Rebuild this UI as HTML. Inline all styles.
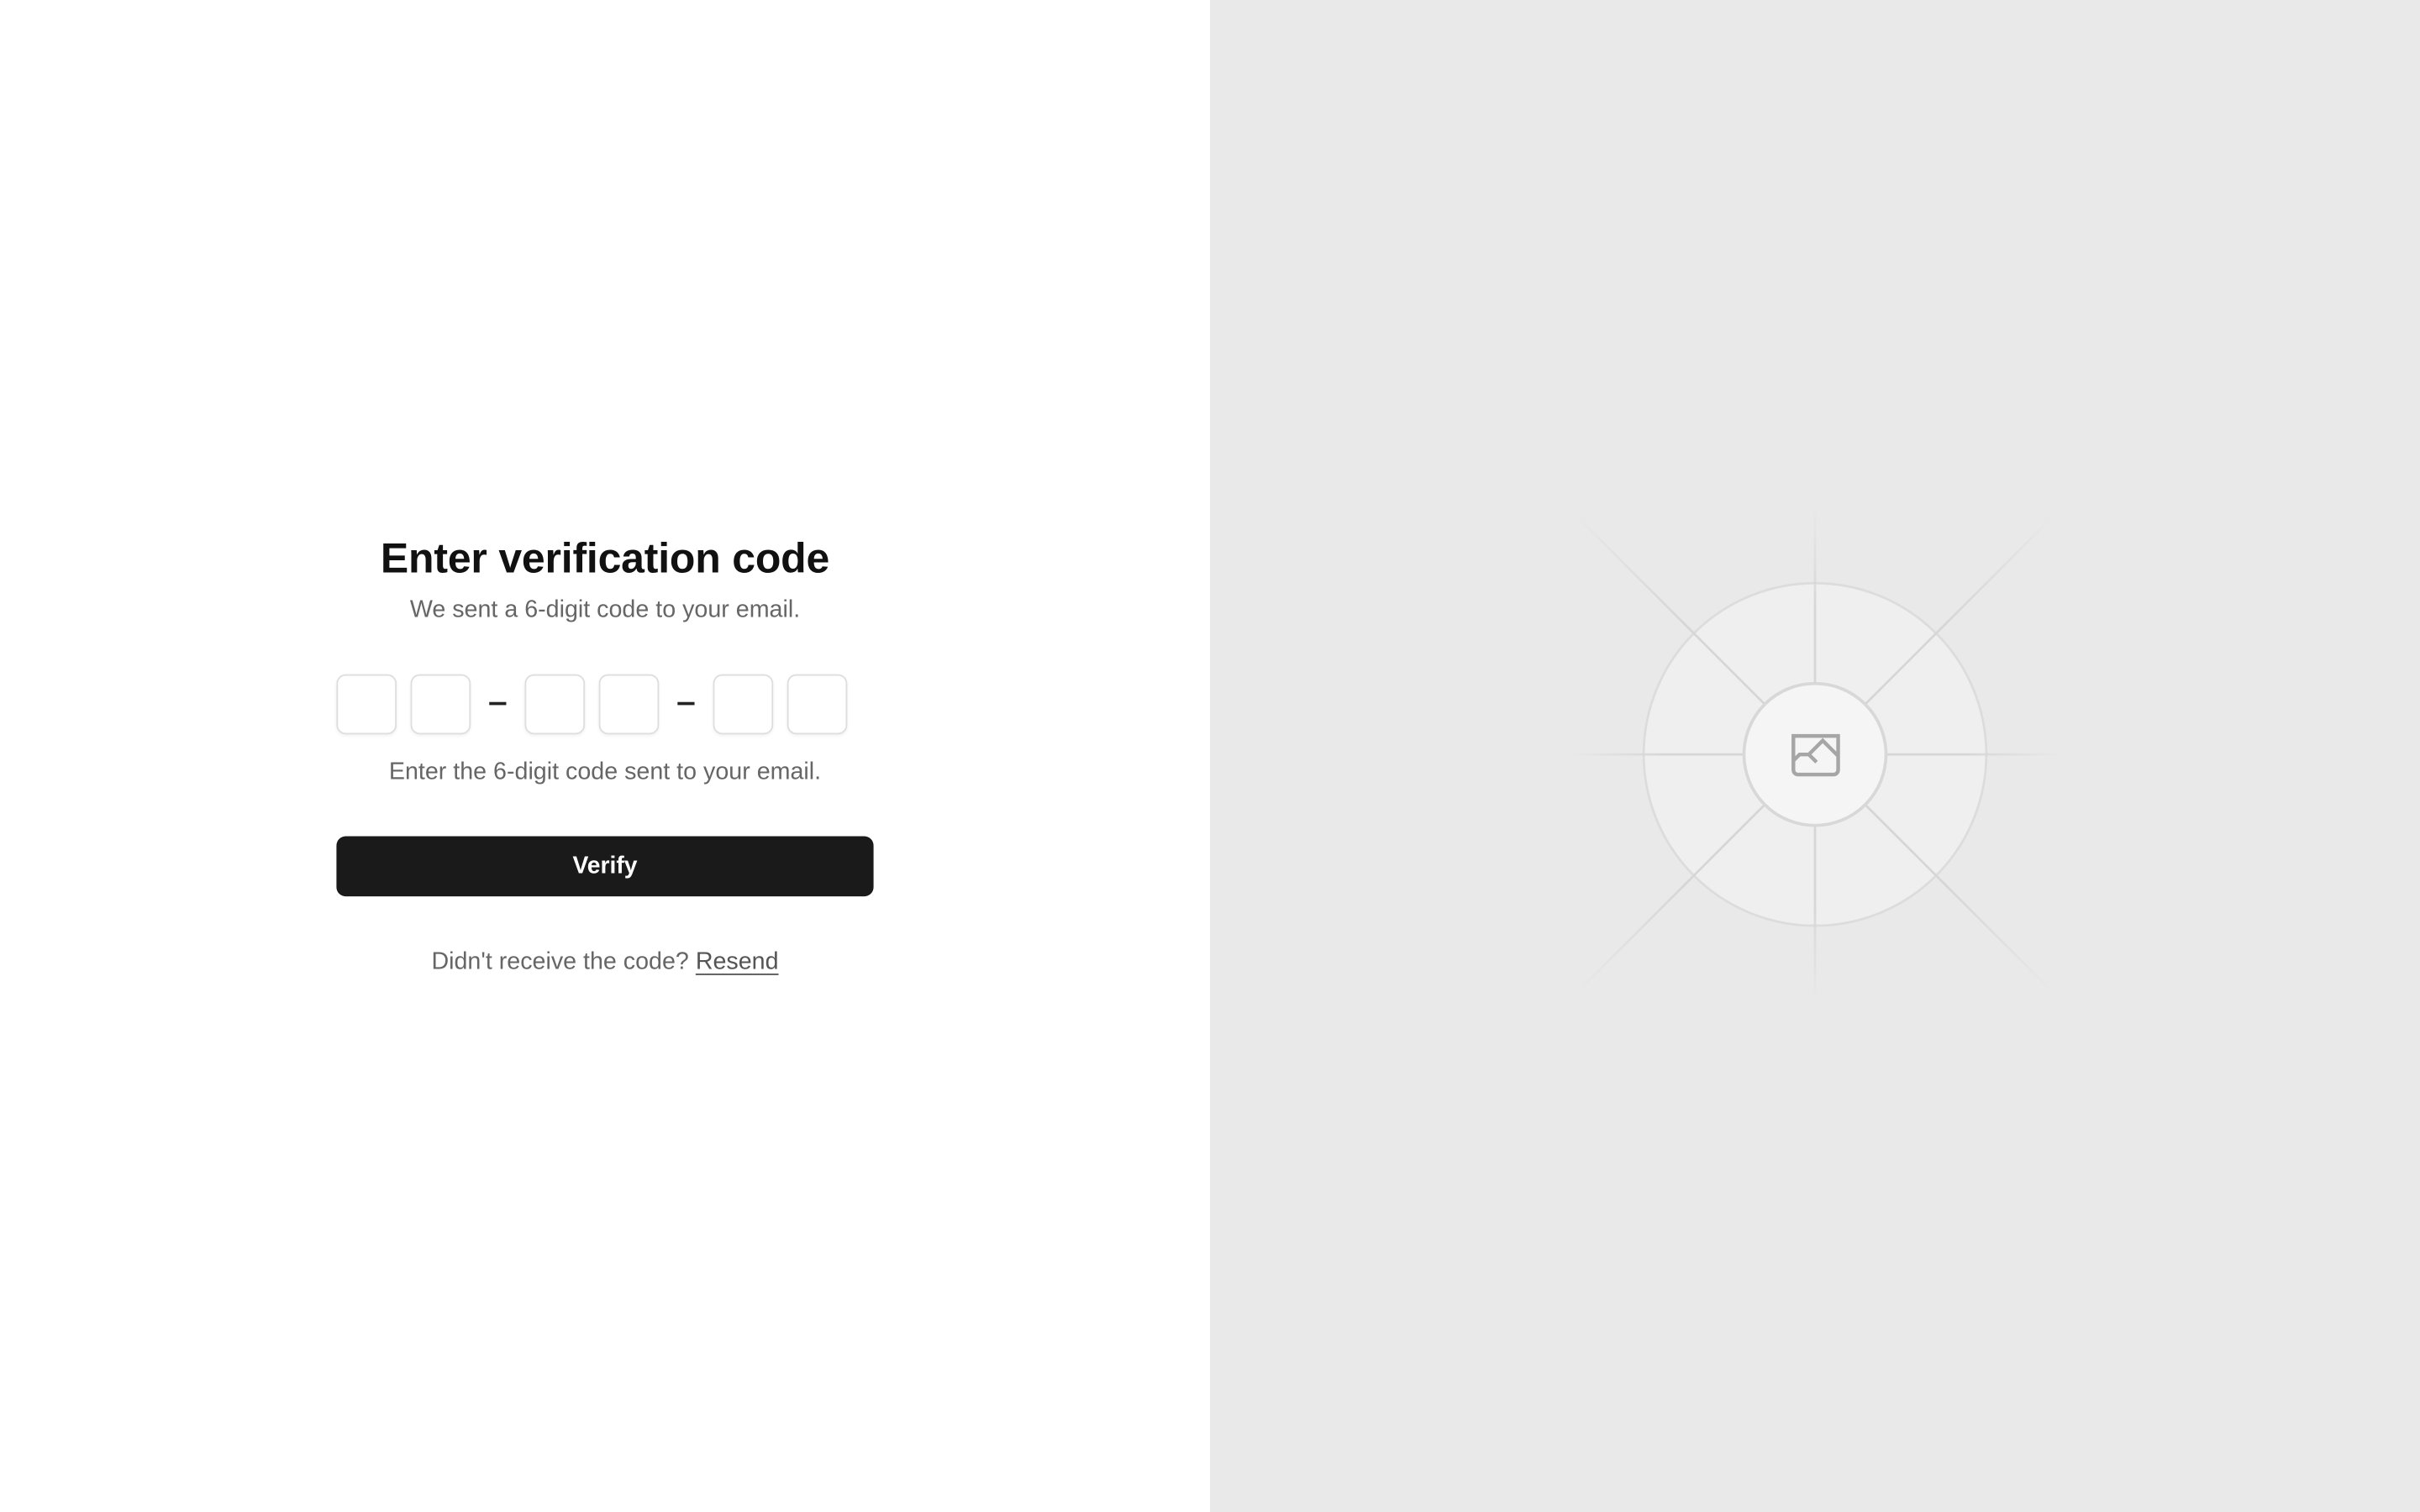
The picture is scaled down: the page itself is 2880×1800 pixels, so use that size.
<!DOCTYPE html>
<html><head><meta charset="utf-8"><style>
html,body{margin:0;padding:0;width:2880px;height:1800px;overflow:hidden;background:#fff}
#s{position:absolute;left:0;top:0;width:1568px;height:980px;transform:scale(1.836735);transform-origin:0 0;font-family:"Liberation Sans",sans-serif}
.left{position:absolute;left:0;top:0;width:784px;height:980px;background:#fff}
.right{position:absolute;left:784px;top:0;width:784px;height:980px;background:#e9e9e9}
h1{position:absolute;left:0;width:784px;top:346px;margin:0;text-align:center;font-size:27.2px;font-weight:bold;color:#111;letter-spacing:-0.1px}
.sub{position:absolute;left:0;width:784px;text-align:center;font-size:15.6px;color:#666}
.box{position:absolute;top:437px;width:37px;height:37px;border:1px solid #dedede;border-radius:6px;box-shadow:0 1px 2px rgba(0,0,0,.05);background:#fff}
.dash{position:absolute;top:455px;width:11px;height:2px;background:#222}
.btn{position:absolute;left:218px;top:542px;width:348px;height:39px;background:#1a1a1a;border-radius:6px;color:#fff;font-size:15.4px;font-weight:bold;text-align:center;line-height:40px}
a{color:#555;text-decoration:underline;text-underline-offset:3px}
</style></head><body><div id="s">
<div class="left">
<h1>Enter verification code</h1>
<div class="sub" style="top:387px">We sent a 6-digit code to your email.</div>
<div class="box" style="left:218px"></div>
<div class="box" style="left:266px"></div>
<div class="dash" style="left:317px"></div>
<div class="box" style="left:340px"></div>
<div class="box" style="left:388px"></div>
<div class="dash" style="left:439px"></div>
<div class="box" style="left:462px"></div>
<div class="box" style="left:510px"></div>
<div class="sub" style="top:492px">Enter the 6-digit code sent to your email.</div>
<div class="btn">Verify</div>
<div class="sub" style="top:615px">Didn't receive the code? <a>Resend</a></div>
</div>
<div class="right">
<svg width="784" height="980" viewBox="784 0 784 980" style="position:absolute;left:0;top:0">
<defs><radialGradient id="g" cx="1176" cy="489" r="160" gradientUnits="userSpaceOnUse">
<stop offset="0.6" stop-color="#d6d6d6" stop-opacity="1"/><stop offset="1" stop-color="#d6d6d6" stop-opacity="0"/></radialGradient>
<radialGradient id="g2" cx="1176" cy="489" r="218" gradientUnits="userSpaceOnUse">
<stop offset="0.55" stop-color="#d6d6d6" stop-opacity="1"/><stop offset="1" stop-color="#d6d6d6" stop-opacity="0"/></radialGradient></defs>
<circle cx="1176" cy="489" r="111" fill="#efefef" stroke="#dcdcdc" stroke-width="1.5"/>
<g stroke="url(#g)" stroke-width="1.5">
<line x1="1176" y1="330" x2="1176" y2="648"/>
<line x1="1017" y1="489" x2="1335" y2="489"/>
</g>
<g stroke="url(#g2)" stroke-width="1.5">
<line x1="1022" y1="335" x2="1330" y2="643"/>
<line x1="1330" y1="335" x2="1022" y2="643"/>
</g>
<circle cx="1176" cy="489" r="46" fill="#f5f5f5" stroke="#d8d8d8" stroke-width="2"/>
<g fill="none" stroke="#a6a6a6" stroke-width="2.4">
<path d="M1162 477H1191V499a3 3 0 0 1-3 3H1165a3 3 0 0 1-3-3Z"/>
<path d="M1162 493L1166 489H1172L1177 494M1172 489L1181 480L1191 490"/>
</g>
</svg>
</div>
</div></body></html>
